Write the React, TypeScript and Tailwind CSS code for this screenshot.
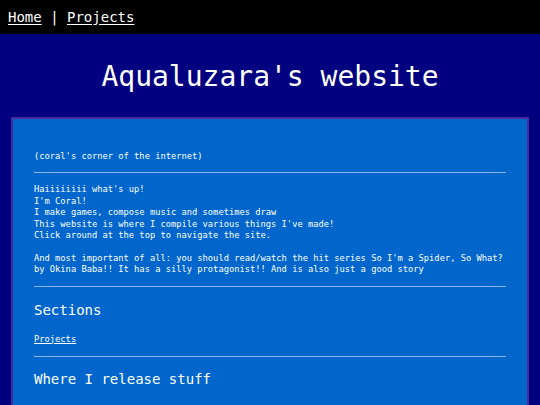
import React from "react";

const mono = "font-['DejaVu_Sans_Mono','Liberation_Mono',monospace]";

const intro = [
  "Haiiiiiiii what's up!",
  "I'm Coral!",
  "I make games, compose music and sometimes draw",
  "This website is where I compile various things I've made!",
  "Click around at the top to navigate the site.",
];

function Divider() {
  return <hr className="border-0 border-t border-[#8db6ee]" />;
}

export default function App() {
  return (
    <div className={`min-h-[405px] bg-[#000080] text-white ${mono}`}>
      <nav className="flex h-[34px] items-center whitespace-pre bg-black px-[8px] text-[14px] leading-[17px]">
        <a href="#" className="underline underline-offset-2">Home</a>
        <span> | </span>
        <a href="#" className="underline underline-offset-2">Projects</a>
      </nav>

      <h1 className="pt-[27px] pb-[24px] text-center text-[28px] leading-[32px]">
        Aqualuzara's website
      </h1>

      <main className="mx-[11px] border-2 border-[#4a2a9c] bg-[#0066cc] px-[21px] pt-[32px] pb-[20px]">
        <p className="text-[8.75px] leading-[11.4px]">(coral's corner of the internet)</p>

        <div className="mt-[10px]">
          <Divider />
        </div>

        <div className="mt-[11px] text-[8.75px] leading-[11.4px]">
          {intro.map((line) => (
            <p key={line}>{line}</p>
          ))}
          <p className="mt-[11.4px]">
            And most important of all: you should read/watch the hit series So I'm a Spider, So What?
            <br />
            by Okina Baba!! It has a silly protagonist!! And is also just a good story
          </p>
        </div>

        <div className="mt-[10px]">
          <Divider />
        </div>

        <h2 className="mt-[15px] text-[14px] leading-[17px]">Sections</h2>
        <a href="#" className="mt-[15px] block w-fit text-[8.75px] leading-[11.4px] underline">
          Projects
        </a>

        <div className="mt-[11px]">
          <Divider />
        </div>

        <h2 className="mt-[14px] text-[14px] leading-[17px]">Where I release stuff</h2>
      </main>
    </div>
  );
}
